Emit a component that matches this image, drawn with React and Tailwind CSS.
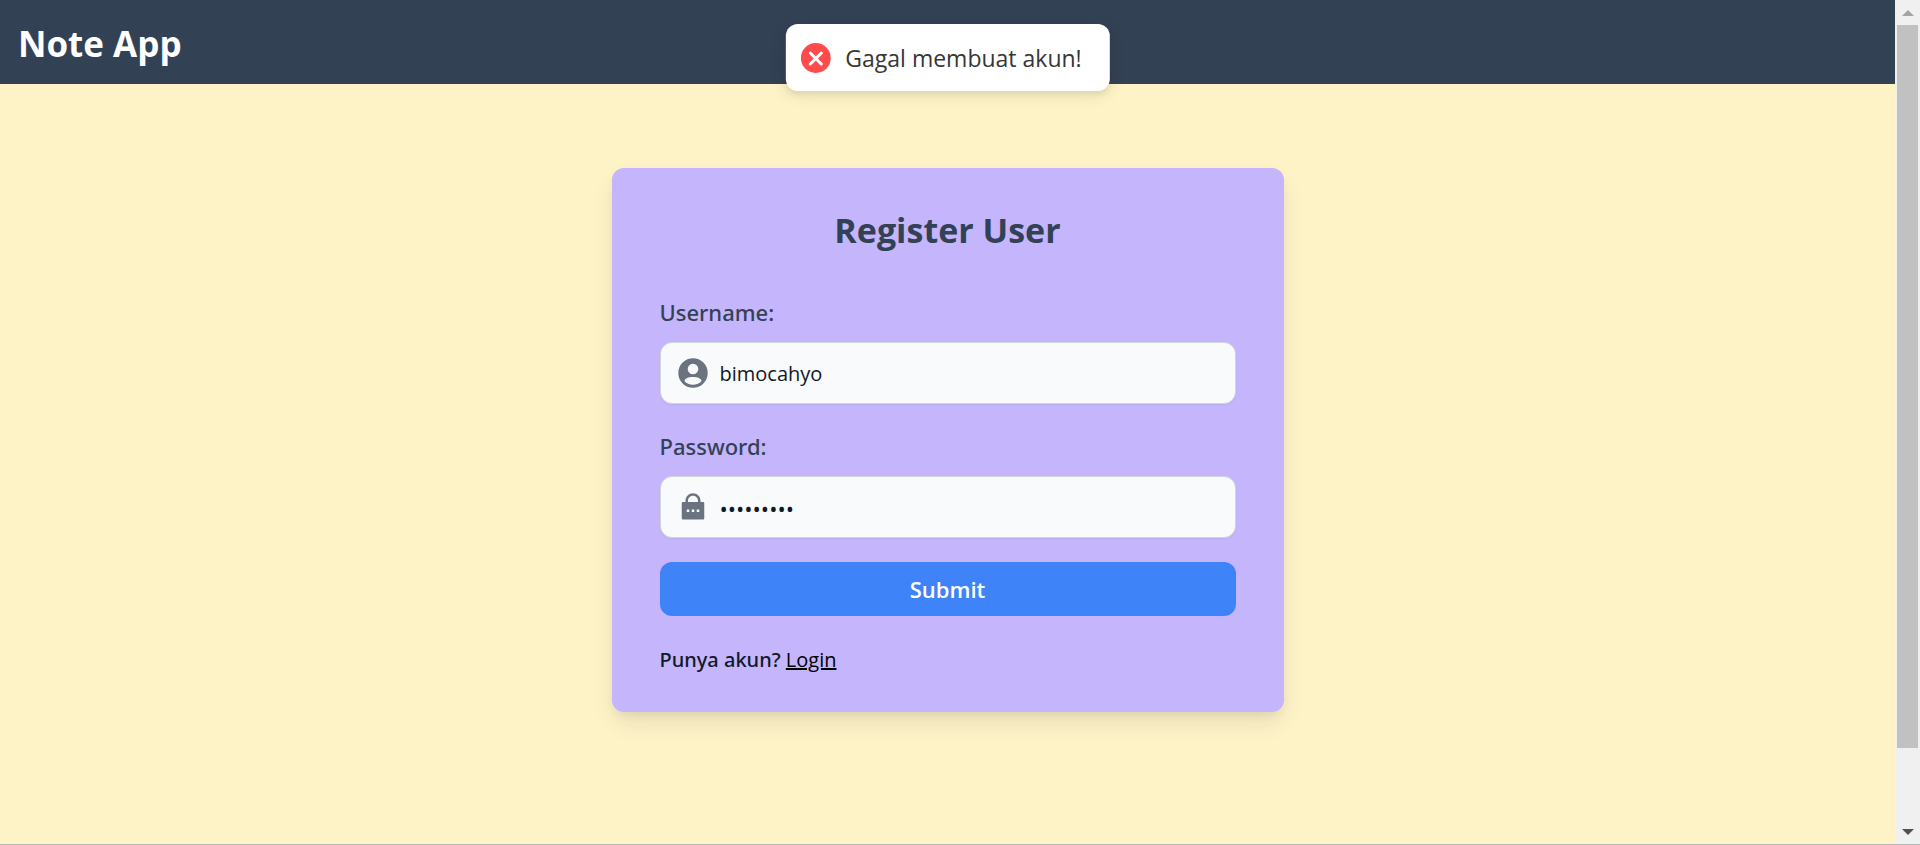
import { RiLockPasswordFill } from "react-icons/ri";

function Header() {
  return (
    <header className="bg-[#334155] px-[18px] pt-6 pb-5">
      <h1 className="text-[35px] leading-[40px] font-bold text-white">Note App</h1>
    </header>
  );
}

function Toast({ message }) {
  return (
    <div
      role="status"
      className="absolute top-6 left-1/2 flex h-[67px] -translate-x-1/2 items-center rounded-xl bg-white pr-7 pl-[15px] whitespace-nowrap shadow-[0_4px_15px_rgba(0,0,0,0.1),0_4px_5px_rgba(0,0,0,0.05)]"
    >
      <svg viewBox="0 0 30 30" className="size-[30px]" aria-hidden="true">
        <circle cx="15" cy="15" r="15" fill="#ff4b4b" />
        <path d="M9.5 10l11 11M20.5 10l-11 11" stroke="#fff" strokeWidth="3" strokeLinecap="round" />
      </svg>
      <p className="ml-[15px] text-[23px] leading-8 text-[#363636]">{message}</p>
    </div>
  );
}

function AccountIcon() {
  return (
    <svg viewBox="0 0 30 30" className="size-[30px]" fill="currentColor" aria-hidden="true">
      <path
        fillRule="evenodd"
        d="M15 .3a14.7 14.7 0 1 0 0 29.4 14.7 14.7 0 0 0 0-29.4zM15 5.7a5.3 5.3 0 1 1 0 10.6 5.3 5.3 0 0 1 0-10.6zM6.5 23C6.5 20.4 10.5 18.9 15 18.9S23.5 20.4 23.5 23C21.5 25.5 18.5 26.8 15 26.8S8.5 25.5 6.5 23z"
      />
    </svg>
  );
}

function Field({ id, label, icon, inputClass, ...props }) {
  return (
    <div className="mb-6 flex flex-col">
      <label htmlFor={id} className="mb-3 font-['Noto_Sans','Open_Sans',sans-serif] text-[22px] leading-9 font-medium text-[#334155]">
        {label}
      </label>
      <div className="flex h-[62px] items-center gap-3 rounded-xl border border-gray-300 bg-[#f9fafb] pl-[17px] shadow-[0_1px_2px_rgba(0,0,0,0.05)]">
        <span className="text-[#6b7280]">{icon}</span>
        <input
          id={id}
          className={`min-w-0 flex-1 bg-transparent pt-[2px] text-[#111827] outline-none ${inputClass}`}
          {...props}
        />
      </div>
    </div>
  );
}

function ScrollBar() {
  return (
    <div aria-hidden="true" className="flex w-[25px] shrink-0 flex-col items-center bg-[#f0f0f0]">
      <div className="flex h-[25px] items-center">
        <svg viewBox="0 0 12 6" className="h-[6px] w-[12px]"><path d="M6 0l6 6H0z" fill="#a3a3a3" /></svg>
      </div>
      <div className="min-h-0 w-[21px] flex-[723] bg-[#c1c1c1]" />
      <div className="flex-[71]" />
      <div className="flex h-[25px] items-center">
        <svg viewBox="0 0 12 6" className="h-[6px] w-[12px]"><path d="M0 0h12L6 6z" fill="#505050" /></svg>
      </div>
    </div>
  );
}

export default function App() {
  return (
    <div className="flex min-h-screen border-b border-[#b4b8b4] bg-[#fef3c7] font-['Open_Sans','Noto_Sans',sans-serif]">
      <div className="relative min-w-0 flex-1">
        <Header />
        <Toast message="Gagal membuat akun!" />
        <main className="px-6 py-[84px]">
          <form
            onSubmit={(e) => e.preventDefault()}
            className="mx-auto max-w-2xl rounded-xl bg-[#c4b5fd] px-12 py-9 shadow-[0_12px_24px_-3px_rgba(0,0,0,0.1),0_5px_8px_-2px_rgba(0,0,0,0.05)]"
          >
            <h2 className="mb-[38px] text-center text-[34px] leading-[52px] font-bold text-[#334155]">Register User</h2>
            <Field id="username" label="Username:" inputClass="text-[20px]" icon={<AccountIcon />} defaultValue="bimocahyo" autoComplete="username" />
            <Field id="password" label="Password:" inputClass="text-[22px]" type="password" icon={<RiLockPasswordFill className="size-[30px]" />} defaultValue="rahasia12" autoComplete="new-password" />
            <button type="submit" className="h-[54px] w-full rounded-xl bg-[#3f83f8] text-[22px] font-semibold text-white">
              Submit
            </button>
            <p className="mt-7 text-[20px] leading-8 text-black">
              <span className="font-['Noto_Sans','Open_Sans',sans-serif] font-medium text-[#111827]">Punya akun?</span>{" "}
              <a href="#login" className="underline">Login</a>
            </p>
          </form>
        </main>
      </div>
      <ScrollBar />
    </div>
  );
}
